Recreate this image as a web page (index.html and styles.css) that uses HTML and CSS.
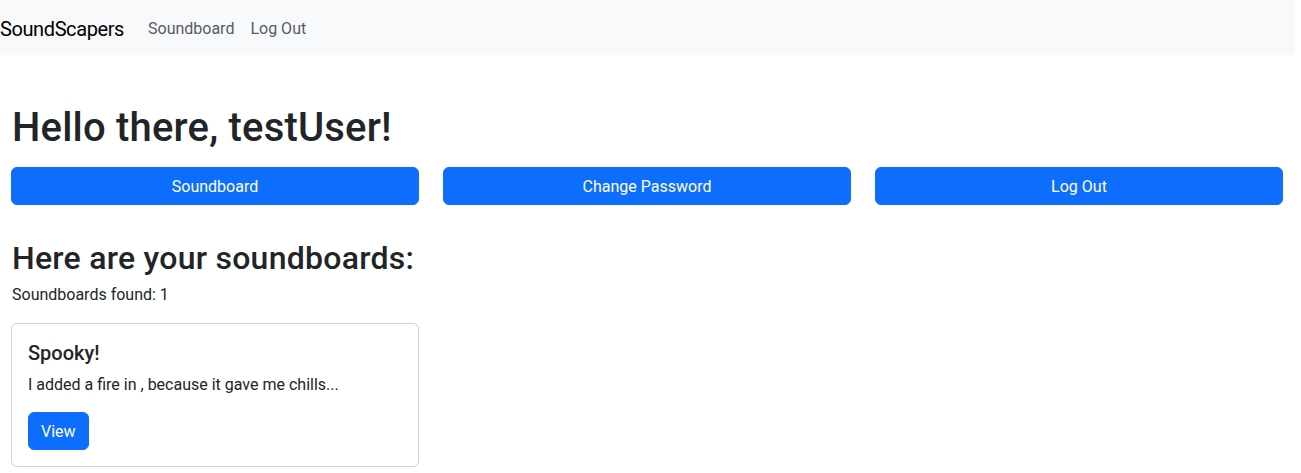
FILE: index.html
```html
<!DOCTYPE html>
<html lang="en">
<head>
<meta charset="utf-8">
<title>SoundScapers</title>
<link rel="stylesheet" href="styles.css">
</head>
<body>
<div class="page">
  <nav class="navbar">
    <a class="brand" href="#">SoundScapers</a>
    <ul class="nav">
      <li><a class="nav-link" href="#">Soundboard</a></li>
      <li><a class="nav-link" href="#">Log Out</a></li>
    </ul>
  </nav>
  <main class="container">
    <h1 class="title">Hello there, testUser!</h1>
    <div class="actions">
      <a class="btn btn-block" href="#">Soundboard</a>
      <a class="btn btn-block" href="#">Change Password</a>
      <a class="btn btn-block" href="#">Log Out</a>
    </div>
    <h2 class="subtitle">Here are your soundboards:</h2>
    <p class="count">Soundboards found: 1</p>
    <div class="cards">
      <div class="card">
        <h5 class="card-title">Spooky!</h5>
        <p class="card-text">I added a fire in , because it gave me chills...</p>
        <a class="btn" href="#">View</a>
      </div>
    </div>
  </main>
</div>
</body>
</html>
```

FILE: styles.css
```css
* { box-sizing: border-box; }
html, body { margin: 0; padding: 0; }
body {
  font-family: Roboto, "Open Sans", sans-serif;
  font-size: 16px;
  line-height: 1.5;
  color: #212529;
  background: #fff;
}
.page { width: calc(100% - 6px); }
.navbar {
  display: flex;
  align-items: center;
  height: 55px;
  background: #f8f9fa;
}
.brand {
  font-size: 20px;
  line-height: 28px;
  padding-top: 2px;
  letter-spacing: -0.4px;
  color: #000;
  text-decoration: none;
  margin-right: 16px;
}
.nav {
  display: flex;
  list-style: none;
  margin: 0;
  padding: 0;
}
.nav-link {
  display: block;
  padding: 9px 8px 7px;
  color: #525c67;
  text-decoration: none;
}
.container { padding: 47px 12px 0; }
.title {
  margin: 0 0 15px;
  padding-top: 2px;
  font-size: 40px;
  font-weight: 500;
  line-height: 48px;
  letter-spacing: 0.2px;
}
.actions {
  display: grid;
  grid-template-columns: repeat(3, 1fr);
  gap: 24px;
  margin-left: -1px;
}
.btn {
  display: inline-block;
  padding: 7px 12px 5px;
  font-size: 16px;
  line-height: 24px;
  color: #fff;
  background: #0d6efd;
  border: 1px solid #0d6efd;
  border-radius: 6px;
  text-decoration: none;
  text-align: center;
}
.btn-block { display: block; }
.subtitle {
  margin: 34px 0 6px;
  font-size: 32px;
  font-weight: 500;
  line-height: 38.4px;
  letter-spacing: 0.25px;
}
.count { margin: 0 0 15.5px; }
.cards {
  display: grid;
  grid-template-columns: repeat(3, 1fr);
  gap: 24px;
  margin-left: -1px;
}
.card {
  border: 1px solid rgba(0,0,0,.175);
  border-radius: 6px;
  padding: 16px;
}
.card-title {
  margin: 0 0 6.5px;
  padding-top: 1.5px;
  font-size: 20px;
  font-weight: 500;
  line-height: 24px;
}
.card-text { margin: 0 0 15px; padding-top: 1px; }
```
